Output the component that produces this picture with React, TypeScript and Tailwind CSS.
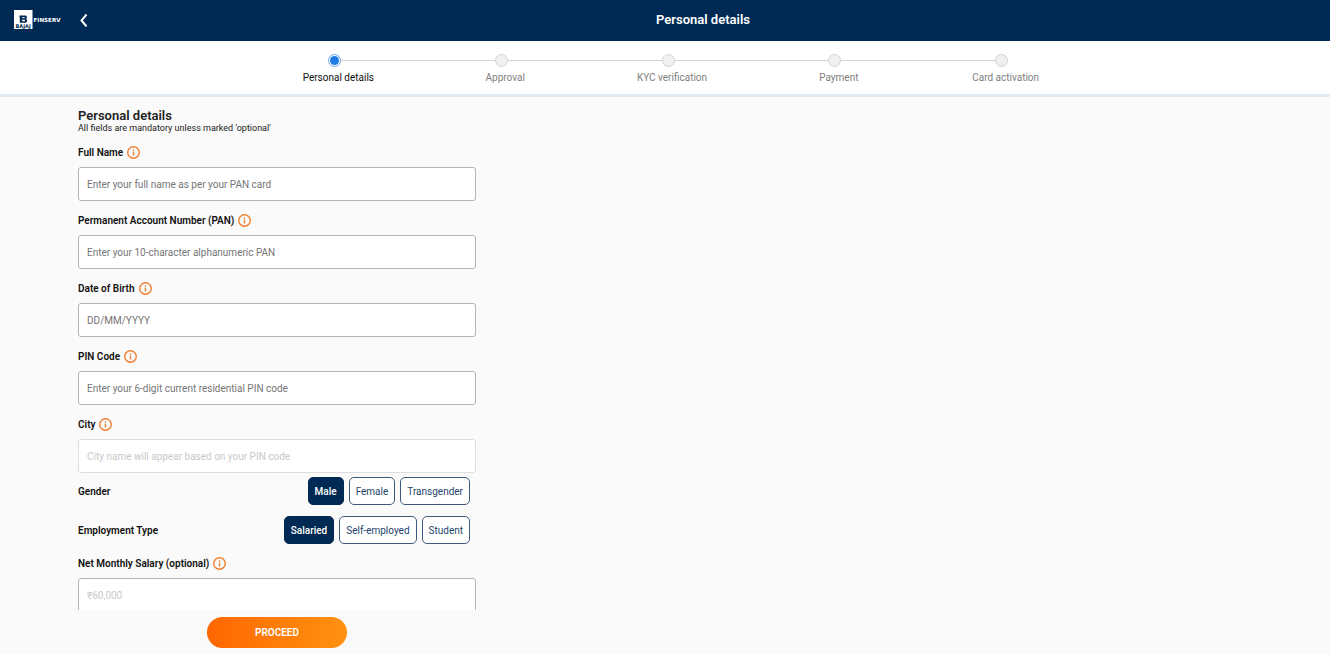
import { useState } from "react";

const steps = ["Personal details", "Approval", "KYC verification", "Payment", "Card activation"];

function InfoIcon() {
  return (
    <svg viewBox="0 0 13 13" className="size-[13px] shrink-0" fill="none" aria-hidden="true">
      <circle cx="6.5" cy="6.5" r="5.8" stroke="#f07f30" strokeWidth="1.4" />
      <rect x="5.8" y="3.4" width="1.4" height="1.4" fill="#f07f30" />
      <rect x="5.8" y="5.7" width="1.4" height="3.8" fill="#f07f30" />
    </svg>
  );
}

function Logo() {
  return (
    <svg viewBox="0 0 48 19" className="h-[19px] w-12" role="img" aria-label="Bajaj Finserv">
      <rect width="18.5" height="19" fill="#fff" />
      <path
        fill="#002953"
        fillRule="evenodd"
        d="M5.500 5.500h5.400c1.500 0 2 .7 2 1.700 0 .8-.3 1.300-.8 1.600.6.300 1 .9 1 1.700 0 1.500-.9 2.300-2.400 2.300H5.800V7.300H5.500zM8.200 7.200v1.100h2c.9 0 .9-1.100 0-1.100zM8.200 9.800v1.400h2.200c1 0 1-1.400 0-1.400z"
      />
      <text x="9.200" y="18.200" textAnchor="middle" fontFamily="DejaVu Sans, sans-serif" fontWeight="700" fontSize="5" fill="#002953">
        BAJAJ
      </text>
      <text x="19.500" y="11.600" fontFamily="DejaVu Sans, sans-serif" fontWeight="700" fontSize="5.600" fill="#fff">
        FINSERV
      </text>
    </svg>
  );
}

type FieldProps = { id: string; label: string; placeholder: string; disabled?: boolean; faint?: boolean };

function Field({ id, label, placeholder, disabled, faint }: FieldProps) {
  return (
    <div>
      <div className="mt-2.5 mb-1.5 flex h-[18px] items-center gap-1">
        <label htmlFor={id} className="text-[10px] font-semibold text-[#111]">
          {label}
        </label>
        <button type="button" aria-label={`About ${label}`}>
          <InfoIcon />
        </button>
      </div>
      <input
        id={id}
        type="text"
        placeholder={placeholder}
        disabled={disabled}
        className={`block h-[34px] w-full rounded-[3px] border bg-white px-2 text-[10px] outline-none ${
          disabled ? "border-[#dedede]" : "border-[#b4b4b4]"
        } ${disabled || faint ? "placeholder:text-[#c9c9c9]" : "placeholder:text-[#757575]"}`}
      />
    </div>
  );
}

function Choice({ name, label, options }: { name: string; label: string; options: string[] }) {
  const [value, setValue] = useState(options[0]);
  return (
    <fieldset className="flex h-7 items-center justify-between pr-1.5">
      <legend className="float-left text-[10px] font-semibold text-[#111]">{label}</legend>
      <div className="ml-auto flex gap-[5px]">
        {options.map((option) => (
          <label
            key={option}
            className={`flex h-7 cursor-pointer items-center rounded-[5px] border px-1.5 text-[10px] ${
              value === option
                ? "border-[#002953] bg-[#002953] font-medium text-white"
                : "border-[#3d5a7c] bg-white text-[#24456b]"
            }`}
          >
            <input
              type="radio"
              name={name}
              checked={value === option}
              onChange={() => setValue(option)}
              className="sr-only"
            />
            {option}
          </label>
        ))}
      </div>
    </fieldset>
  );
}

export default function App() {
  return (
    <div className="flex h-screen flex-col bg-[#fafafa] font-[Roboto,sans-serif] text-[#222]">
      <header className="grid h-[41px] shrink-0 grid-cols-3 items-center bg-[#002953] px-3.5 pb-0.5 text-white">
        <div className="flex items-center gap-4">
          <Logo />
          <button type="button" aria-label="Back">
            <svg viewBox="0 0 12 14" className="h-3.5 w-3" fill="none" aria-hidden="true">
              <path d="M8.500 1.500 3.500 7.500 8.500 13.500" stroke="#fff" strokeWidth="2" />
            </svg>
          </button>
        </div>
        <h1 className="col-start-2 pl-[76px] text-center text-[13px] font-semibold">Personal details</h1>
      </header>

      <nav aria-label="Progress" className="shrink-0 border-b-3 border-[#e4eaf4] bg-white pl-1.5">
        <ol className="mx-auto flex h-[53px] w-[63%] pt-[13px]">
          {steps.map((step, i) => (
            <li key={step} className="flex flex-1 flex-col items-center" aria-current={i === 0 ? "step" : undefined}>
              <div className="flex w-full items-center">
                <span className={`h-px flex-1 ${i === 0 ? "" : "bg-[#d3d3d3]"}`} />
                <span
                  className={`flex size-[13px] items-center justify-center rounded-full border ${
                    i === 0 ? "border-[#6ba5ee] bg-white" : "border-[#d3d3d3] bg-[#f0f0f0]"
                  }`}
                >
                  {i === 0 && <span className="size-[9px] rounded-full bg-[#1f7ae6]" />}
                </span>
                <span className={`h-px flex-1 ${i === steps.length - 1 ? "" : "bg-[#d3d3d3]"}`} />
              </div>
              <span className={`mt-[5px] pl-2 text-[10px] leading-3 ${i === 0 ? "text-[#111]" : "text-[#808080]"}`}>
                {step}
              </span>
            </li>
          ))}
        </ol>
      </nav>

      <form className="flex min-h-0 flex-1 flex-col" onSubmit={(e) => e.preventDefault()}>
        <div className="min-h-0 flex-1 overflow-y-auto px-[78px] pt-[11px] [scrollbar-width:none]">
          <div className="max-w-[398px]">
            <h2 className="text-[13px] leading-4 font-semibold">Personal details</h2>
            <p className="text-[9px] leading-[9px]">All fields are mandatory unless marked 'optional'</p>
            <Field id="name" label="Full Name" placeholder="Enter your full name as per your PAN card" />
            <Field id="pan" label="Permanent Account Number (PAN)" placeholder="Enter your 10-character alphanumeric PAN" />
            <Field id="dob" label="Date of Birth" placeholder="DD/MM/YYYY" />
            <Field id="pin" label="PIN Code" placeholder="Enter your 6-digit current residential PIN code" />
            <Field id="city" label="City" placeholder="City name will appear based on your PIN code" disabled />
            <div className="mt-1 flex flex-col gap-[11px]">
              <Choice name="gender" label="Gender" options={["Male", "Female", "Transgender"]} />
              <Choice name="employment" label="Employment Type" options={["Salaried", "Self-employed", "Student"]} />
            </div>
            <Field id="salary" label="Net Monthly Salary (optional)" placeholder="₹60,000" faint />
          </div>
        </div>
        <div className="shrink-0 px-[78px] pt-[7px] pb-[5px]">
          <div className="flex max-w-[398px] justify-center">
            <button
              type="submit"
              className="h-[31px] w-[140px] rounded-full bg-linear-to-r from-[#ff6600] to-[#ff9110] text-[10px] font-semibold text-white"
            >
              PROCEED
            </button>
          </div>
        </div>
      </form>
    </div>
  );
}
